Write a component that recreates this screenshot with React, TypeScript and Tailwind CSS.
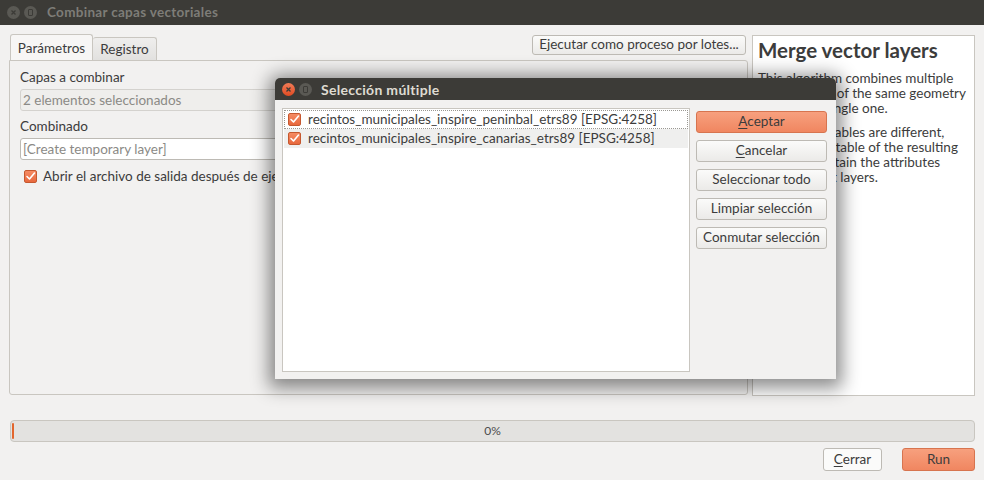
import React from 'react'

const Check = () => (
  <span className="flex h-[13px] w-[13px] shrink-0 items-center justify-center rounded-[2px] border border-[#c5582f] bg-gradient-to-b from-[#f58b63] to-[#e8683d]">
    <svg width="11" height="11" viewBox="0 0 11 11">
      <path d="M2 5.5 L4.5 8 L9.5 2" fill="none" stroke="#fff" strokeWidth="1.6" strokeLinecap="round" strokeLinejoin="round" />
    </svg>
  </span>
)

const Btn = ({ label, u, primary, className = '' }: { label: string; u?: number; primary?: boolean; className?: string }) => {
  const text = u === undefined ? label : (
    <>
      {label.slice(0, u)}<span className="underline underline-offset-2">{label[u]}</span>{label.slice(u + 1)}
    </>
  )
  return (
    <button
      className={
        'flex items-center justify-center rounded-[3px] border text-[13.5px] leading-none ' +
        (primary
          ? 'border-[#d7744f] bg-gradient-to-b from-[#f7a07e] to-[#f08660] text-[#3c3c3c]'
          : 'border-[#bdbab4] bg-gradient-to-b from-[#fbfbfa] to-[#ebeae8] text-[#3c3c3c]') +
        ' ' + className
      }
    >
      {text}
    </button>
  )
}

const WinCircle = ({ kind, active }: { kind: 'close' | 'min'; active?: boolean }) => (
  <span
    className={
      'flex h-[13px] w-[13px] items-center justify-center rounded-full ' +
      (kind === 'close' && active ? 'bg-gradient-to-b from-[#f27b56] to-[#df4a20]' : 'bg-[#5a5954]')
    }
  >
    {kind === 'close' ? (
      <svg width="7" height="7" viewBox="0 0 7 7">
        <path d="M1.5 1.5 L5.5 5.5 M5.5 1.5 L1.5 5.5" stroke="#3c3b37" strokeWidth="1.3" />
      </svg>
    ) : (
      <span className="h-[7px] w-[5px] rounded-[1px] border border-[#3c3b37]" />
    )}
  </span>
)

export default function App() {
  return (
    <div className="relative h-[480px] w-[984px] overflow-hidden bg-[#f2f1f0] font-['Lato',sans-serif] text-[13.5px] text-[#3c3c3c]">
      {/* main title bar */}
      <div className="flex h-[25px] items-center bg-[#3c3b37] pl-[7px]">
        <div className="flex gap-[4px]">
          <WinCircle kind="close" />
          <WinCircle kind="min" />
        </div>
        <span className="ml-[10px] text-[13.5px] font-bold tracking-[0.3px] text-[#7e7d78]">Combinar capas vectoriales</span>
      </div>

      <div className="flex gap-[4px] pl-[9px] pt-[10px]">
        {/* left column */}
        <div className="flex w-[739px] flex-col">
          <div className="flex h-[25px] items-end justify-between">
            <div className="flex items-end pl-[1px]">
              <div className="flex h-[26px] w-[83px] items-center justify-center rounded-t-[3px] border border-b-0 border-[#c9c6c0] bg-[#f7f6f5] pt-[2px]">Parámetros</div>
              <div className="flex h-[23px] w-[64px] items-center justify-center rounded-t-[3px] border border-b-0 border-l-0 border-[#c9c6c0] bg-gradient-to-b from-[#efeeed] to-[#e2e1df]">Registro</div>
            </div>
            <Btn label="Ejecutar como proceso por lotes..." className="mb-[5px] mr-[2px] h-[20px] w-[214px]" />
          </div>
          <div className="h-[335px] rounded-b-[3px] rounded-tr-[3px] border border-[#c9c6c0] bg-[#f2f1f0] px-[10px] pt-[8px]">
            <div className="leading-[16px]">Capas a combinar</div>
            <div className="mt-[4px] flex h-[22px] items-center rounded-[3px] border border-[#d4d2ce] bg-[#efeeec] px-[2px] text-[#8b8a86]">2 elementos seleccionados</div>
            <div className="mt-[7px] leading-[16px]">Combinado</div>
            <div className="mt-[4px] flex h-[22px] items-center rounded-[3px] border border-[#bdbab4] bg-white px-[2px] text-[#8b8a86]">[Create temporary layer]</div>
            <div className="mt-[6px] flex items-center gap-[6px] pl-[4px]">
              <Check />
              <span>Abrir el archivo de salida después de ejecutar el algoritmo</span>
            </div>
          </div>
        </div>

        {/* right help panel */}
        <div className="h-[361px] w-[223px] border border-[#c9c6c0] bg-white px-[5px] pt-[2px]">
          <div className="text-[20.5px] font-bold leading-[24px] text-[#3c3c3c]">Merge vector layers</div>
          <p className="mt-[9px] whitespace-nowrap leading-[15px]">
            This algorithm combines multiple<br />vector layers of the same geometry<br />type into a single one.
          </p>
          <p className="mt-[9px] whitespace-nowrap leading-[15px]">
            If attributes tables are different,<br />the attribute table of the resulting<br />layer will contain the attributes<br />from all input layers.
          </p>
        </div>
      </div>

      {/* progress */}
      <div className="ml-[10px] mt-[24px] flex h-[22px] w-[965px] items-center rounded-[4px] border border-[#c9c6c0] bg-[#e3e2e0]">
        <span className="ml-[1px] h-[16px] w-[2px] rounded-[1px] bg-[#e2662e]" />
        <span className="flex-1 pr-[3px] text-center text-[12px] text-[#4c4c4c]">0%</span>
      </div>
      <div className="mt-[6px] flex justify-end gap-[20px] pr-[9px]">
        <Btn label="Cerrar" u={0} className="h-[23px] w-[59px] bg-none bg-[#fbfbfa]" />
        <Btn label="Run" primary className="h-[23px] w-[73px]" />
      </div>

      {/* dialog */}
      <div className="absolute left-[275px] top-[78px] flex h-[301px] w-[561px] flex-col rounded-t-[5px] bg-[#f2f1f0] shadow-[0_3px_18px_6px_rgba(0,0,0,0.45)]">
        <div className="flex h-[22px] items-center rounded-t-[5px] bg-[#3c3b37] pl-[7px]">
          <div className="flex gap-[4px]">
            <WinCircle kind="close" active />
            <WinCircle kind="min" />
          </div>
          <span className="ml-[9px] text-[14px] font-bold tracking-[0.3px] text-[#dfdbd2]">Selección múltiple</span>
        </div>
        <div className="flex gap-[6px] px-[7px] pt-[8px]">
          <div className="h-[264px] w-[408px] border border-[#c9c6c0] bg-white p-[1px]">
            <div className="flex h-[19px] items-center gap-[7px] border border-dotted border-[#9a9892] pl-[3px]">
              <Check />
              <span>recintos_municipales_inspire_peninbal_etrs89 [EPSG:4258]</span>
            </div>
            <div className="flex h-[19px] items-center gap-[7px] bg-[#efefee] pl-[4px]">
              <Check />
              <span>recintos_municipales_inspire_canarias_etrs89 [EPSG:4258]</span>
            </div>
          </div>
          <div className="flex w-[131px] flex-col gap-[7px] pt-[3px]">
            <Btn label="Aceptar" u={0} primary className="h-[22px] w-full" />
            <Btn label="Cancelar" u={0} className="h-[22px] w-full" />
            <Btn label="Seleccionar todo" className="h-[22px] w-full" />
            <Btn label="Limpiar selección" className="h-[22px] w-full" />
            <Btn label="Conmutar selección" className="h-[22px] w-full" />
          </div>
        </div>
      </div>
    </div>
  )
}
